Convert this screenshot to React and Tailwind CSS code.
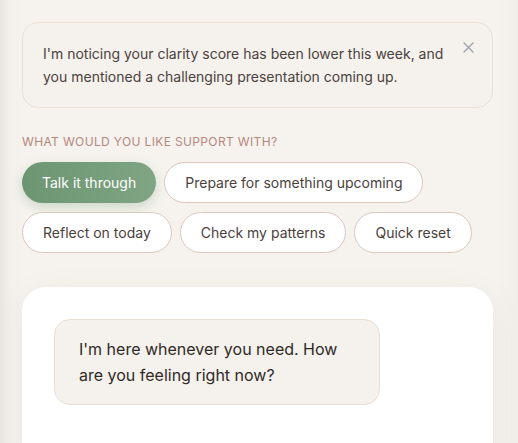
import React, { useState } from 'react';

const options = [
    'Talk it through',
    'Prepare for something upcoming',
    'Reflect on today',
    'Check my patterns',
    'Quick reset',
];

export default function App() {
    const [selected, setSelected] = useState('Talk it through');
    const [showNote, setShowNote] = useState(true);

    return (
        <div
            className="h-[443px] overflow-hidden w-full bg-[linear-gradient(to_right,#e9e6e2_0px,#f3f0ec_10px,#f6f3ef_24px,#f6f3ef_calc(100%-24px),#f1eeea)] pl-[22px] pr-[25px] pt-[22px] text-[#4a413d]"
            style={{ fontFamily: 'Inter, "Noto Sans", sans-serif' }}
        >
            {showNote && (
                <div className="relative rounded-2xl border border-[#ecdfd5] bg-[#f5f1ec] py-[19px] pl-5 pr-12 text-[14px] leading-[23px] text-[#4a423e]">
                    I'm noticing your clarity score has been lower this week, and you mentioned a challenging presentation coming up.
                    <button
                        onClick={() => setShowNote(false)}
                        className="absolute right-[18px] top-[19px] text-[#9ca1a8]"
                    >
                        <svg width="11" height="11" viewBox="0 0 11 11" fill="none" stroke="currentColor" strokeWidth="1.3" strokeLinecap="round">
                            <path d="M1 1l9 9M10 1l-9 9" />
                        </svg>
                    </button>
                </div>
            )}

            <div className="mt-[26px] mb-3 text-[12px] leading-4 uppercase tracking-[0.03em] text-[#b4877d]">
                What would you like support with?
            </div>

            <div className="flex flex-wrap gap-x-2 gap-y-[9px] w-[460px]">
                {options.map(o => (
                    <button
                        key={o}
                        onClick={() => setSelected(o)}
                        className={`h-[41px] rounded-full px-5 text-[14px] ${
                            selected === o
                                ? 'bg-[linear-gradient(to_right,#6c9571,#7fa583)] text-white shadow-[0_4px_12px_rgba(108,149,113,0.3)]'
                                : 'bg-white border border-[#dcc6bb] text-[#4a413d]'
                        }`}
                    >
                        {o}
                    </button>
                ))}
            </div>

            <div className="mt-[34px] h-[200px] rounded-3xl bg-white p-8 shadow-[0_6px_28px_rgba(120,100,80,0.09)]">
                <div className="max-w-[80%] rounded-2xl border border-[#eadfd5] bg-[#f5f1ec] px-6 py-4 text-[16px] leading-[26px] text-[#2f2a27]">
                    I'm here whenever you need. How are you feeling right now?
                </div>
            </div>
        </div>
    );
}
